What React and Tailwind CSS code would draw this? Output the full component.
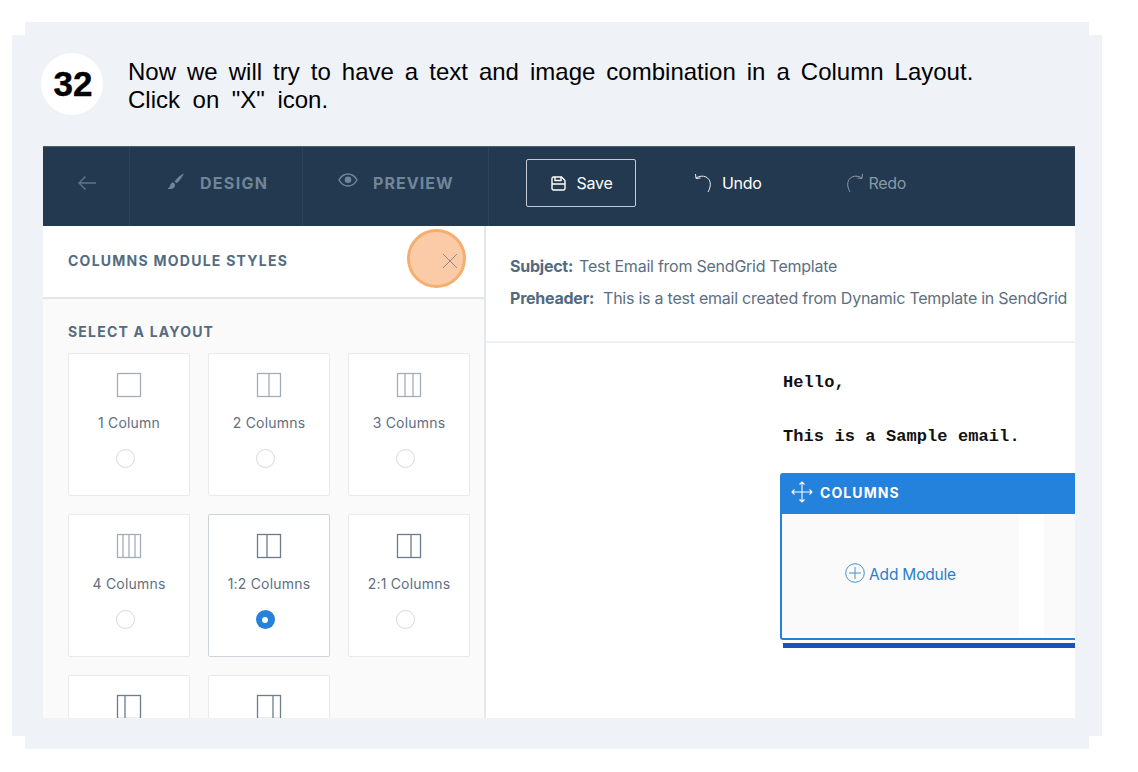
import React from "react";

const ui = "font-['Inter','Liberation_Sans',sans-serif]";

function LayoutIcon({ dividers, dark }) {
  const c = dark ? "#6b7c8d" : "#a3adb8";
  return (
    <svg width="26" height="26" viewBox="0 0 26 26" fill="none" stroke={c} strokeWidth="1.3" className="block">
      <rect x="1.5" y="1.5" width="23" height="23" />
      {dividers.map((d) => (
        <line key={d} x1={d} y1="1.5" x2={d} y2="24.5" />
      ))}
    </svg>
  );
}

function Card({ label, dividers, selected, clipped }) {
  return (
    <div className={`h-[143px] rounded-[2px] bg-white border flex flex-col items-center pt-[18px] ${selected ? "border-[#cfd4da]" : "border-[#e8eaed]"}`}>
      <LayoutIcon dividers={dividers} dark={selected || clipped} />
      <div className="mt-[15px] text-[14px] leading-[20px] text-[#5f6f7f] tracking-[0.2px]">{label}</div>
      <div className="mt-[16px] -ml-[8px]">
        {selected ? (
          <div className="w-[19px] h-[19px] rounded-full bg-[#2481dc] flex items-center justify-center">
            <div className="w-[6px] h-[6px] rounded-full bg-white" />
          </div>
        ) : (
          <div className="w-[19px] h-[19px] rounded-full border border-[#d5d9de] bg-white" />
        )}
      </div>
    </div>
  );
}

function NavCell({ className, children }) {
  return <div className={`h-full flex items-center border-r border-[#2c4359] ${className}`}>{children}</div>;
}

export default function App() {
  return (
    <div className="w-[1138px] h-[772px] bg-white overflow-hidden pt-[22px] pl-[25px]">
      <div className="w-[1064px] h-[727px] bg-[#eff2f7] py-[13px]">
        <div className="-mx-[13px] h-[701px] bg-[#eff2f7] pl-[29px] pt-[18px]">
          <div className="flex h-[62px] items-start">
            <div className="w-[62px] h-[62px] rounded-full bg-white flex items-center justify-center pl-[2px] text-black text-[35px] font-bold font-['Liberation_Sans',sans-serif] [-webkit-text-stroke:0.4px_black]">
              32
            </div>
            <div className="ml-[25px] mt-[5px] text-[24px] leading-[27.5px] text-black font-['Liberation_Sans',sans-serif] whitespace-nowrap">
              <div className="[word-spacing:4.35px]">Now we will try to have a text and image combination in a Column Layout.</div>
              <div className="[word-spacing:5.9px]">Click on "X" icon.</div>
            </div>
          </div>

          <div className={`mt-[31px] ml-[2px] w-[1032px] h-[572px] overflow-hidden bg-white ${ui}`}>
            <div className="h-[80px] bg-[#22394f] flex items-center border-t border-[#4a5f74]">
              <NavCell className="w-[87px] pl-[34px] pb-[8px]">
                <svg width="20" height="16" viewBox="0 0 20 16" fill="none" stroke="#5f7488" strokeWidth="1.4"><path d="M19 8H2M8.5 1.5 2 8l6.5 6.5" /></svg>
              </NavCell>
              <NavCell className="w-[173px] pl-[36px] pb-[8px]">
                <svg width="19" height="19" viewBox="0 0 19 19" fill="#71859a" className="-mt-[3px]"><path d="M18 1.2c-3.4 1.8-7 5-9.4 8.2l2 1.9C13.600 9 16.400 5 18 1.200ZM7.500 10.500c-2.200.2-3 1.500-3.500 3.300-.3 1.300-1.200 2-2.500 3 2.500.6 6.400.3 7.500-2.800.3-1-.2-2.500-1.500-3.500Z" /></svg>
                <span className="ml-[15px] text-[16px] font-bold tracking-[1.3px] text-[#71859a]">DESIGN</span>
              </NavCell>
              <NavCell className="w-[186px] pl-[35px] pb-[8px]">
                <svg width="20" height="14" viewBox="0 0 20 14" className="-mt-[5px]"><path d="M1 7c2-3.600 5.300-6 9-6s7 2.400 9 6c-2 3.600-5.300 6-9 6s-7-2.400-9-6Z" fill="none" stroke="#71859a" strokeWidth="1.500" /><circle cx="10" cy="6.700" r="3.300" fill="#71859a" /></svg>
                <span className="ml-[15px] text-[16px] font-bold tracking-[1.05px] text-[#71859a]">PREVIEW</span>
              </NavCell>
              <div className="ml-[37px] w-[110px] h-[48px] -mt-[7px] border border-[#c3ccd4] rounded-[2px] flex items-center justify-center pl-[2px] text-white text-[16px] tracking-[-0.2px]">
                <svg width="15" height="15" viewBox="0 0 15 15" fill="none" stroke="#fff" strokeWidth="1.400" className="mr-[10px]"><path d="M1 2.500A1.500 1.500 0 0 1 2.500 1h8L14 4.500v8a1.500 1.500 0 0 1-1.500 1.500h-10A1.500 1.500 0 0 1 1 12.500Z" /><path d="M1 8h13M4 1v3.500h6V1" /></svg>
                Save
              </div>
              <div className="ml-[58px] -mt-[7px] flex items-center text-white text-[16px] tracking-[-0.3px]">
                <svg width="22" height="22" viewBox="0 0 22 22" fill="none" stroke="#e8edf1" strokeWidth="1" className="mr-[6px]"><path d="M2 6c3-2 7-2.500 10-1 4.500 2.300 6 8 2 15M1.500 2 2 6.500 6.500 6" /></svg>
                Undo
              </div>
              <div className="ml-[80px] -mt-[7px] flex items-center text-[#8a98a6] text-[16px] tracking-[-0.3px]">
                <svg width="22" height="22" viewBox="0 0 22 22" fill="none" stroke="#8a98a6" strokeWidth="1" className="mr-[5px]"><path d="M20 6c-3-2-7-2.500-10-1C5.500 7.300 4 13 8 20M20.500 2 20 6.500 15.500 6" /></svg>
                Redo
              </div>
            </div>

            <div className="flex h-[492px]">
              <div className="w-[443px] shrink-0 border-r-2 border-[#e4e7eb] bg-[#fafafa]">
                <div className="relative h-[73px] bg-white border-b-2 border-[#e2e5e9] pl-[25px] pt-[25px] text-[14px] leading-[20px] font-bold tracking-[1.25px] text-[#546b81]">
                  COLUMNS MODULE STYLES
                  <div className="absolute left-[364px] top-[3px] w-[59px] h-[59px] rounded-full bg-[#fbcba8] border-[3px] border-[#f6ae6f] flex items-center justify-center">
                    <svg width="16" height="16" viewBox="0 0 16 16" fill="none" stroke="#8c8c88" strokeWidth="1" className="ml-[26px] mt-[5px]"><path d="M1 1l14 14M15 1 1 15" /></svg>
                  </div>
                </div>
                <div className="pl-[25px] pt-[23px] pr-[14px]">
                  <div className="text-[14px] leading-[20px] font-bold tracking-[1.2px] text-[#546b81]">SELECT A LAYOUT</div>
                  <div className="mt-[11px] grid grid-cols-[122px_122px_122px] gap-[18px]">
                    <Card label="1 Column" dividers={[]} />
                    <Card label="2 Columns" dividers={[13]} />
                    <Card label="3 Columns" dividers={[9, 17]} />
                    <Card label="4 Columns" dividers={[7, 13, 19]} />
                    <Card label="1:2 Columns" dividers={[11]} selected />
                    <Card label="2:1 Columns" dividers={[15]} clipped />
                    <Card label="" dividers={[9]} clipped />
                    <Card label="" dividers={[17]} clipped />
                  </div>
                </div>
              </div>

              <div className="flex-1 min-w-0 overflow-hidden">
                <div className="h-[117px] border-b-2 border-[#eef0f2] pl-[24px] pt-[30px] text-[16px] text-[#5c6f82] whitespace-nowrap tracking-[-0.24px]">
                  <div className="leading-[20px]"><b className="font-bold text-[#54697e]">Subject:</b><span className="ml-[6px]">Test Email from SendGrid Template</span></div>
                  <div className="mt-[12px] leading-[20px]"><b className="font-bold text-[#54697e]">Preheader:</b><span className="ml-[9px]">This is a test email created from Dynamic Template in SendGrid</span></div>
                </div>
                <div className="pl-[297px] pt-[30px] font-['Liberation_Mono',monospace] font-bold text-[17px] leading-[20px] tracking-[0.09px] text-[#111]">
                  <div>Hello,</div>
                  <div className="mt-[34px] whitespace-nowrap">This is a Sample email.</div>
                </div>
                <div className={`ml-[294px] mt-[26px] w-[400px] ${ui}`}>
                  <div className="h-[167px] border-2 border-[#2481dc] rounded-[3px] bg-white">
                    <div className="h-[40px] -mx-[1px] -mt-[1px] bg-[#2481dc] flex items-center pl-[10px] pb-[4px] text-white text-[14px] font-bold tracking-[1.1px]">
                      <svg width="22" height="22" viewBox="0 0 22 22" fill="none" stroke="#fff" strokeWidth="1.100" className="mr-[7px]"><path d="M11 1v20M1 11h20M8.500 3.500 11 1l2.500 2.500M8.500 18.500 11 21l2.500-2.500M3.500 8.500 1 11l2.500 2.500M18.500 8.500 21 11l-2.500 2.500" /></svg>
                      COLUMNS
                    </div>
                    <div className="flex h-[122px]">
                      <div className="w-[237px] bg-[#fafafa] flex items-center justify-center text-[#2b7fc9] text-[15.5px] tracking-[-0.2px]">
                        <svg width="20" height="20" viewBox="0 0 20 20" fill="none" stroke="#4a90c8" strokeWidth="1" className="mr-[4px] -mt-[5px]"><circle cx="10" cy="10" r="9.300" /><path d="M10 4v12M4 10h12" /></svg>
                        Add Module
                      </div>
                      <div className="w-[25px] bg-white" />
                      <div className="flex-1 bg-[#fafafa]" />
                    </div>
                  </div>
                  <div className="ml-[3px] mt-[3px] h-[5px] bg-[#1a53b8]" />
                </div>
              </div>
            </div>
          </div>
        </div>
      </div>
    </div>
  );
}
